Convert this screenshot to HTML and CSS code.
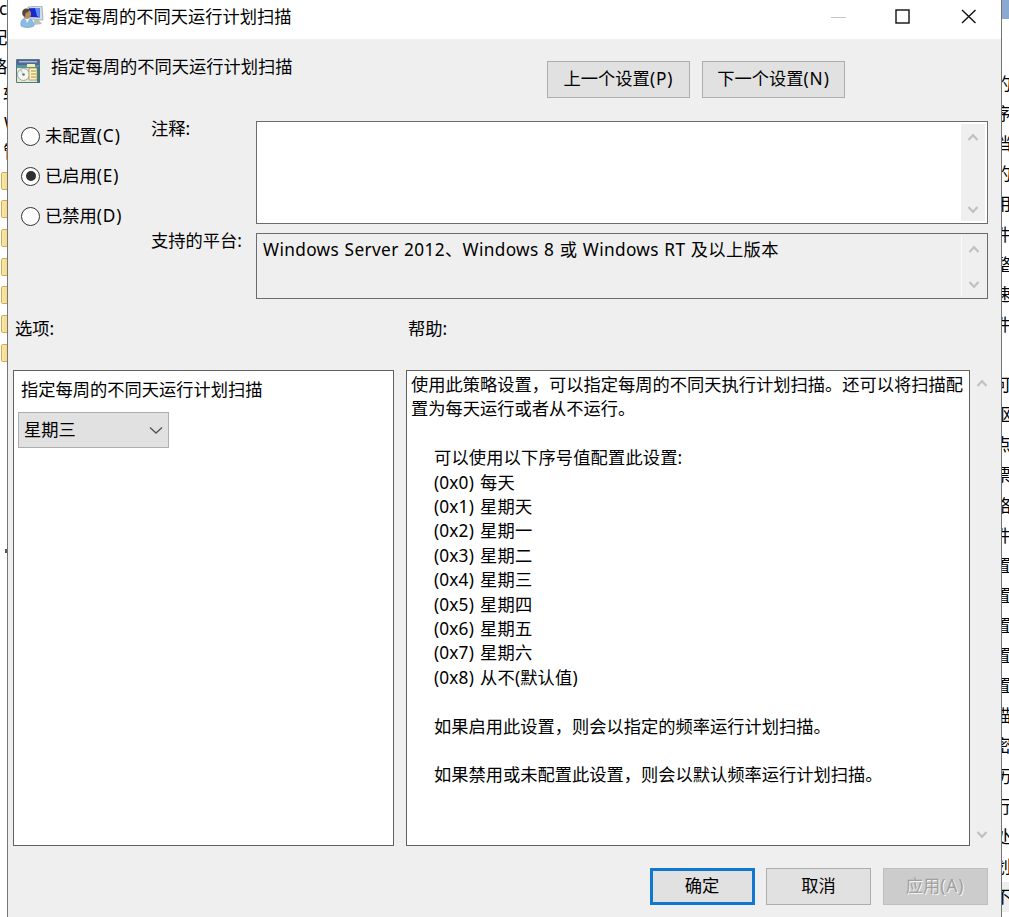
FILE: index.html
```
<!DOCTYPE html>
<html lang="zh-CN">
<head>
<meta charset="utf-8">
<title>指定每周的不同天运行计划扫描</title>
<link rel="stylesheet" href="styles.css">
</head>
<body>
<svg class="defs" aria-hidden="true">
  <symbol id="up" viewBox="0 0 12 10"><path d="M1.500 8 6 3.200 10.500 8" fill="none" stroke="currentColor" stroke-width="2.200"/></symbol>
  <symbol id="down" viewBox="0 0 12 10"><path d="M1.500 2 6 6.800 10.500 2" fill="none" stroke="currentColor" stroke-width="2.200"/></symbol>
</svg>
<div class="desktop">
  <aside class="tree">
    <span class="tree-latin">c</span><span>配</span><span>略</span><span class="tree-in">软</span><span class="tree-w">W</span><span class="tree-in">管</span>
    <i class="folder"></i><i class="folder"></i><i class="folder"></i><i class="folder"></i><i class="folder"></i><i class="folder"></i><i class="folder"></i>
    <i class="speck"></i>
  </aside>
  <main class="dialog">
    <header class="titlebar">
      <svg class="app-icon" viewBox="0 0 24 22">
        <path d="M8 1 22 0 23 14 9 13Z" fill="#d5dce0" stroke="#93a4b1" stroke-width=".8"/>
        <path d="M9 2.200 19.500 2 20 11.500 9 11Z" fill="#1728c8"/>
        <path d="M15 2 19.500 2 20 11.500 17 10Z" fill="#5b8cf5"/>
        <path d="M14 14h5l3 4-8 1Z" fill="#b8c0c5"/>
        <path d="M1 20C0 14 3 12 7 12s7 3 7 8c-4 2-9 2-13 0Z" fill="#8bbbe0" stroke="#72a0c4" stroke-width=".6"/>
        <path d="M5 12 7 17 10 12Z" fill="#e9f4fb"/>
        <ellipse cx="7" cy="8" rx="4" ry="5" fill="#b98d61"/>
        <path d="M2.500 9C1 3 6 1 10 4L8 6 5.500 7 5 11Z" fill="#554838"/>
      </svg>
      <h1>指定每周的不同天运行计划扫描</h1>
      <svg class="controls" viewBox="0 0 150 20">
        <path d="M1 10.500h15" stroke="#c4c4c4"/>
        <rect x="66" y="3" width="13" height="13" fill="none" stroke="#111" stroke-width="1.400"/>
        <path d="m132 3 13.500 13M145.500 3 132 16" stroke="#111" stroke-width="1.400"/>
      </svg>
    </header>
    <section class="heading">
      <svg class="policy-icon" viewBox="0 0 24 24">
        <path d="M.5.500h23v23H.5Z" fill="#e9e7cc" stroke="#477d83"/>
        <path d="M1 1h22v5H1Z" fill="#53659b"/><path d="M3 2h18v1.500H3Z" fill="#a9b9c8"/>
        <path d="M1 6h22v3H1Z" fill="#55979b"/><path d="M11 5h8v3h-8Z" fill="#f5efb5"/>
        <path d="M21 8h3v16h-3Z" fill="#407a80"/>
        <circle cx="7.500" cy="15.500" r="6" fill="#f5f5f0" stroke="#a5a69a"/>
        <path d="M7 15 3 11l3-1Z" fill="#bfd7d4"/><circle cx="7.500" cy="15.500" r="1.300" fill="#687278"/>
        <path d="M13 9h8v12h-8Z" fill="#fff3bd" stroke="#8c8156" stroke-width=".7"/>
        <path d="M15 12h5M15 15h5M15 18h5" stroke="#a78c46"/>
      </svg>
      <p>指定每周的不同天运行计划扫描</p>
      <button class="nav">上一个设置<span class="key">(P)</span></button>
      <button class="nav">下一个设置<span class="key">(N)</span></button>
    </section>
    <section class="state">
      <div class="radios">
        <label><i class="radio"></i><span>未配置<span class="key">(C)</span></span></label>
        <label><i class="radio on"></i><span>已启用<span class="key">(E)</span></span></label>
        <label><i class="radio"></i><span>已禁用<span class="key">(D)</span></span></label>
      </div>
      <div class="labels"><span>注释:</span><span>支持的平台:</span></div>
      <div class="fields">
        <div class="field comment"><span></span><div class="scroll"><svg><use href="#up"/></svg><svg><use href="#down"/></svg></div></div>
        <div class="field platform"><span class="platform-text">Windows Server 2012、Windows 8 或 Windows RT 及以上版本</span><div class="scroll"><svg><use href="#up"/></svg><svg><use href="#down"/></svg></div></div>
      </div>
    </section>
    <div class="captions"><span>选项:</span><span>帮助:</span></div>
    <section class="panels">
      <div class="options">
        <p>指定每周的不同天运行计划扫描</p>
        <div class="select"><span>星期三</span><svg viewBox="0 0 14 9"><path d="m1 1.500 6 5.500 6-5.500" fill="none" stroke="#555" stroke-width="1.400"/></svg></div>
      </div>
      <div class="help">
        <p>使用此策略设置，可以指定每周的不同天执行计划扫描。还可以将扫描配<br>置为每天运行或者从不运行。</p>
        <div class="indent">
          <p>可以使用以下序号值配置此设置:<br>(0x0) 每天<br>(0x1) 星期天<br>(0x2) 星期一<br>(0x3) 星期二<br>(0x4) 星期三<br>(0x5) 星期四<br>(0x6) 星期五<br>(0x7) 星期六<br>(0x8) 从不(默认值)</p>
          <p class="note">如果启用此设置，则会以指定的频率运行计划扫描。</p>
          <p class="note">如果禁用或未配置此设置，则会以默认频率运行计划扫描。</p>
        </div>
      </div>
      <div class="scroll help-scroll"><svg><use href="#up"/></svg><svg><use href="#down"/></svg></div>
    </section>
    <footer>
      <button class="primary">确定</button><button>取消</button><button class="disabled" disabled>应用<span class="key">(A)</span></button>
    </footer>
  </main>
  <aside class="behind">
    <div class="behind-head"></div>
    <span>的</span><span>序</span><span>档</span><span>的</span><span>用</span><span>件</span><span>整</span><span>速</span><span>件</span><span></span><span>可</span><span>驱</span><span>点</span><span>票</span><span>络</span><span>件</span><span>置</span><span>置</span><span>置</span><span>置</span><span>置</span><span>描</span><span>密</span><span>历</span><span>行</span><span>处</span><span>划</span><span class="shade">不</span>
  </aside>
</div>
</body>
</html>
```
FILE: styles.css
```
* { box-sizing: border-box; }
body {
  margin: 0;
  overflow: hidden;
  color: #000;
  background: #fff;
  font: 17.25px/24.4px "Noto Sans", "Noto Sans CJK SC", sans-serif;
}
h1, p { margin: 0; font-size: inherit; font-weight: normal; }
.defs { display: none; }
.desktop { display: flex; width: 1009px; height: 917px; overflow: hidden; }
.key { letter-spacing: .9px; }

/* Sliver of the console tree left of the dialog */
.tree { display: flex; flex-direction: column; width: 7px; overflow: hidden; }
.tree span { flex: none; width: 18px; height: 28.5px; margin-left: -10px; line-height: 24px; }
.tree .tree-latin { margin-left: -1px; height: 26px; line-height: 18px; }
.tree .tree-in { margin-left: 3px; }
.tree .tree-w { margin-left: 4px; }
.folder {
  flex: none;
  width: 14px;
  height: 18px;
  margin: 5px 0 5.700px 1px;
  border: 1px solid #d1ae56;
  border-radius: 2px;
  background: linear-gradient(90deg, #fbe7a5, #e9cb70);
}
.folder:first-of-type { margin-top: 3px; }
.speck { width: 2px; height: 4px; margin: 182px 0 0 5px; background: #555; }

.dialog {
  display: flex;
  flex-direction: column;
  flex: none;
  width: 995px;
  border: solid #747474;
  border-width: 0 1px;
  background: #efefef;
}
.titlebar { display: flex; align-items: center; height: 39px; padding: 0 21px 5px 12px; background: #fff; }
.app-icon { width: 24px; height: 22px; margin-right: 6px; }
.controls { width: 150px; height: 20px; margin-left: auto; }

.heading { display: flex; height: 82px; padding: 22px 0 0 8px; }
.policy-icon { width: 24px; height: 24px; margin: -2px 11px 0 0; }
.heading p { width: 496px; margin-top: -6px; }
button {
  width: 105px;
  height: 37px;
  padding: 0;
  border: 1px solid #adadad;
  background: #e1e1e1;
  color: #000;
  font: inherit;
}
.nav { width: 143px; margin-right: 12px; }
.nav:last-child { margin-right: 0; }

.state { display: grid; grid-template-columns: 131px 105px 732px; height: 178px; padding-left: 12px; }
.radios { display: flex; flex-direction: column; gap: 15.600px; padding: 3px 0 0 1px; }
.radios label { display: flex; align-items: center; gap: 5px; }
.radio {
  display: grid;
  place-items: center;
  width: 19px;
  height: 19px;
  border: 1.500px solid #333;
  border-radius: 50%;
  background: #fff;
}
.radio.on::after { content: ""; width: 10px; height: 10px; border-radius: 50%; background: #303030; }
.labels { display: flex; flex-direction: column; gap: 88px; margin-top: -4px; }
.fields { display: flex; flex-direction: column; gap: 9px; }
.field { display: flex; justify-content: space-between; border: 1.500px solid #6c6c6c; }
.comment { height: 103px; background: #fff; }
.platform { height: 66px; }
.platform-text { padding: 4px 0 0 6px; white-space: nowrap; letter-spacing: .35px; word-spacing: .6px; }
.scroll {
  display: flex;
  flex-direction: column;
  justify-content: space-between;
  align-items: center;
  width: 24px;
  margin: 2px;
  padding: 8px 0 6px;
  background: #efefef;
  color: #c1c1c1;
}
.scroll svg { width: 12px; height: 10px; }
.platform .scroll { border-left: 1px solid #fafafa; }

.captions { display: grid; grid-template-columns: 393px 1fr; height: 71px; padding: 18px 0 0 7px; }
.panels { display: grid; grid-template-columns: 381px 576px 24px; height: 476px; padding-left: 5px; }
.options, .help { border: 1.500px solid #606060; background: #fff; }
.options { padding: 7px 0 0 4px; }
.options p { padding-left: 3px; }
.select {
  display: flex;
  align-items: center;
  justify-content: space-between;
  width: 151px;
  height: 36px;
  margin-top: 10px;
  padding: 0 5px;
  border: 1px solid #adadad;
  background: #e1e1e1;
}
.select svg { width: 14px; height: 9px; }
.help { margin-left: 12px; padding: 2px 0 0 4px; white-space: nowrap; }
.indent { padding: 24.400px 0 0 23px; word-spacing: 1.500px; }
.indent p + p { margin-top: 24.400px; }
.indent p:first-child { letter-spacing: .15px; }
.help-scroll { margin: 0; }

footer { display: flex; gap: 11.500px; margin: 22px 0 0 641.500px; }
.primary { border: 3px solid #1078d0; }
.disabled { border-color: #bfbfbf; background: #ccc; color: #a0a0a0; text-shadow: 1px 1px #f5f5f5; }

/* Sliver of the window right of the dialog */
.behind { flex: 1; overflow: hidden; }
.behind-head { height: 69px; background: linear-gradient(#8ba9d0 19px, #fff 19px); }
.behind span { display: block; width: 24px; height: 30.120px; text-indent: -8px; line-height: 30px; }
.behind .shade { background: #eee; }
```
